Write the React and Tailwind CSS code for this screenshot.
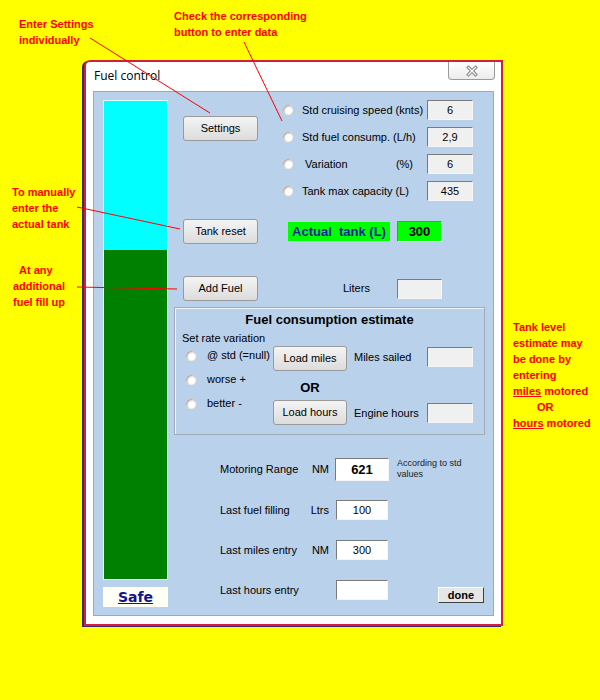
import React from 'react';

const btn = "flex items-center justify-center h-[25px] rounded-[3px] border border-[#9a9a9a] bg-linear-to-b from-[#f4f4f4] to-[#dcdcdc] text-[11px] text-black";
const field = "flex items-center justify-center h-[20px] border border-t-[#7a7a7a] border-l-[#7a7a7a] border-r-[#f6f6f6] border-b-[#f6f6f6] text-[11px] text-black";

const settings = [
  { label: 'Std cruising speed (knts)', value: '6' },
  { label: 'Std fuel consump. (L/h)', value: '2,9' },
  { label: 'Variation', unit: '(%)', value: '6' },
  { label: 'Tank max capacity (L)', value: '435' },
];

const Radio = () => (
  <span className="block w-[12px] h-[12px] shrink-0 rounded-full bg-white border border-[#cacaca] shadow-[inset_1px_1px_2px_#999999]" />
);

const Window = () => {
  return (
    <div className="w-[419px] h-[566px] shrink-0 flex flex-col bg-white border-2 border-[#d41f3c] rounded-tl-[6px] shadow-[-2px_1px_0_#3a2a7a]">
      {/* title bar */}
      <div className="flex items-start h-[29px]">
        <span className="pl-[8px] pt-[6px] text-[12px] leading-[16px] text-black font-['Open_Sans',sans-serif]">Fuel control</span>
        <div className="ml-auto mr-[6px] w-[47px] h-[18px] flex items-center justify-center border border-t-0 border-[#9a9a9a] rounded-b-[4px] bg-linear-to-b from-white to-[#ececec]">
          <svg width="16" height="12" viewBox="0 0 16 12">
            <path d="M4.5 2.5 L11.5 9.5 M11.5 2.5 L4.5 9.5" stroke="#7c7c7c" strokeWidth="3.2" strokeLinecap="square" fill="none" />
            <path d="M4.5 2.5 L11.5 9.5 M11.5 2.5 L4.5 9.5" stroke="#ffffff" strokeWidth="1.3" strokeLinecap="square" fill="none" />
          </svg>
        </div>
      </div>

      {/* panel */}
      <div className="ml-[7px] w-[401px] h-[525px] flex border border-[#a0a8b2] bg-[#b9d1ea]">
        {/* tank gauge */}
        <div className="ml-[9px] mt-[8px] w-[65px] flex flex-col">
          <div className="h-[480px] flex flex-col border border-[#dcfcfc]">
            <div className="h-[149px] bg-[#00ffff]" />
            <div className="flex-1 bg-[#008000]" />
          </div>
          <div className="mt-[7px] h-[20px] flex items-center justify-center bg-[#fffff6]">
            <span className="text-[14px] font-bold underline text-[#14148c] font-['DejaVu_Sans',sans-serif]">Safe</span>
          </div>
        </div>

        {/* controls */}
        <div className="ml-[6px] mt-[8px] w-[311px] flex flex-col">
          <div className="flex h-[102px]">
            <div className="w-[108px]">
              <button className={btn + " ml-[9px] mt-[16px] w-[75px]"}>Settings</button>
            </div>
            <div className="flex flex-col gap-[7px]">
              {settings.map((s) => (
                <div key={s.label} className="flex items-center h-[20px]">
                  <Radio />
                  <div className="w-[133px] pl-[8px] flex text-[11px] text-black whitespace-nowrap">
                    {s.unit ? (
                      <>
                        <span className="pl-[3px]">{s.label}</span>
                        <span className="ml-auto mr-[14px]">{s.unit}</span>
                      </>
                    ) : (
                      <span>{s.label}</span>
                    )}
                  </div>
                  <div className={field + " w-[46px] bg-[#f0f0f0]"}>{s.value}</div>
                </div>
              ))}
            </div>
          </div>

          <div className="mt-[17px] flex items-center h-[25px]">
            <button className={btn + " ml-[9px] w-[75px]"}>Tank reset</button>
            <div className="ml-[30px] w-[102px] h-[19px] flex items-center justify-center bg-[#00ff00] text-[13px] font-bold text-[#1b1ba5] whitespace-pre">Actual  tank (L)</div>
            <div className={field + " ml-[7px] w-[45px] h-[21px] bg-[#00ff00] text-[13px] font-bold"}>300</div>
          </div>

          <div className="mt-[32px] flex items-center h-[25px]">
            <button className={btn + " ml-[9px] w-[75px]"}>Add Fuel</button>
            <span className="ml-[85px] w-[54px] text-[11px] text-black">Liters</span>
            <div className={field + " w-[45px] bg-[#f0f0f0]"} />
          </div>

          {/* fuel consumption frame */}
          <div className="mt-[6px] h-[128px] w-[311px] border border-[#a3abb5] shadow-[inset_1px_1px_0_#eef4fa]">
            <div className="pt-[4px] text-center text-[13px] leading-[16px] font-bold text-black">Fuel consumption estimate</div>
            <div className="mt-[3px] pl-[7px] flex items-start">
              <div className="w-[91px] text-[11px] text-black">
                <div className="leading-[14px]">Set rate variation</div>
                <div className="flex flex-col gap-[3px]">
                  {['@ std (=null)', 'worse +', 'better -'].map((r) => (
                    <div key={r} className="flex items-center h-[21px]">
                      <span className="ml-[3px]"><Radio /></span>
                      <span className="ml-[10px] whitespace-nowrap">{r}</span>
                    </div>
                  ))}
                </div>
              </div>
              <div className="w-[74px] mt-[15px] flex flex-col">
                <button className={btn + " w-[74px]"}>Load miles</button>
                <div className="mt-[9px] text-center text-[13px] leading-[16px] font-bold text-black">OR</div>
                <button className={btn + " mt-[4px] w-[74px]"}>Load hours</button>
              </div>
              <div className="ml-[7px] mt-[16px] flex flex-col text-[11px] text-black">
                <div className="flex items-center h-[20px]">
                  <span className="w-[73px]">Miles sailed</span>
                  <div className={field + " w-[46px] bg-[#f0f0f0]"} />
                </div>
                <div className="mt-[36px] flex items-center h-[20px]">
                  <span className="w-[73px]">Engine hours</span>
                  <div className={field + " w-[46px] bg-[#f0f0f0]"} />
                </div>
              </div>
            </div>
          </div>

          {/* results */}
          <div className="mt-[23px] flex items-start text-[11px] text-black">
            <div className="flex items-center h-[23px]">
              <span className="w-[134px] pl-[46px]">Motoring Range</span>
              <span className="w-[21px] text-right">NM</span>
              <div className={field + " ml-[6px] w-[54px] h-[23px] bg-white text-[13px] font-bold"}>621</div>
            </div>
            <div className="ml-[8px] text-[9px] leading-[11px] text-[#222]">According to std<br />values</div>
          </div>

          <div className="mt-[19px] flex items-center h-[20px] text-[11px] text-black">
            <span className="w-[134px] pl-[46px]">Last fuel filling</span>
            <span className="w-[21px] text-right">Ltrs</span>
            <div className={field + " ml-[7px] w-[52px] bg-white"}>100</div>
          </div>

          <div className="mt-[20px] flex items-center h-[20px] text-[11px] text-black">
            <span className="w-[134px] pl-[46px]">Last miles entry</span>
            <span className="w-[21px] text-right">NM</span>
            <div className={field + " ml-[7px] w-[52px] bg-white"}>300</div>
          </div>

          <div className="mt-[20px] flex items-start h-[20px] text-[11px] text-black">
            <span className="w-[134px] pl-[46px] h-[20px] flex items-center">Last hours entry</span>
            <span className="w-[21px]" />
            <div className={field + " ml-[7px] w-[52px] bg-white"} />
            <button className="ml-auto mr-[1px] mt-[7px] w-[46px] h-[16px] flex items-center justify-center bg-[#e6e6e6] border border-t-white border-l-white border-r-[#404040] border-b-[#404040] text-[11px] font-bold text-black">done</button>
          </div>
        </div>
      </div>
    </div>
  );
};

const App = () => {
  return (
    <div className="relative w-[600px] h-[700px] overflow-hidden bg-[#ffff00] font-['Liberation_Sans',Arial,sans-serif]">
      <div className="flex items-start h-[60px] text-[11px] leading-[16px] font-bold text-[#ff0000]">
        <div className="ml-[19px] mt-[16px] w-[155px]">Enter Settings<br />individually</div>
        <div className="mt-[8px]">Check the corresponding<br />button to enter data</div>
      </div>

      <div className="flex items-start">
        <div className="w-[84px] shrink-0 pt-[124px] text-[11px] leading-[16px] font-bold text-[#ff0000]">
          <div className="pl-[12px]">To manually<br />enter the<br />actual tank</div>
          <div className="mt-[30px] pl-[13px]">
            <div className="pl-[6px]">At any</div>
            <div>additional</div>
            <div>fuel fill up</div>
          </div>
        </div>

        <Window />

        <div className="pl-[10px] pt-[259px] text-[11px] leading-[16px] font-bold text-[#ff0000] whitespace-nowrap">
          <div>Tank level</div>
          <div>estimate may</div>
          <div>be done by</div>
          <div>entering</div>
          <div><span className="underline">miles</span> motored</div>
          <div className="pl-[24px]">OR</div>
          <div><span className="underline">hours</span> motored</div>
        </div>
      </div>

      {/* callout lines */}
      <svg className="absolute inset-0 pointer-events-none" width="600" height="700">
        <line x1="90" y1="38" x2="210" y2="113" stroke="#ff0000" strokeWidth="1" />
        <line x1="244" y1="42" x2="282" y2="121" stroke="#ff0000" strokeWidth="1" />
        <line x1="77" y1="207" x2="180" y2="229" stroke="#ff0000" strokeWidth="1" />
        <line x1="77" y1="287" x2="177" y2="289" stroke="#ff0000" strokeWidth="1" />
      </svg>
    </div>
  );
};

export default App;
